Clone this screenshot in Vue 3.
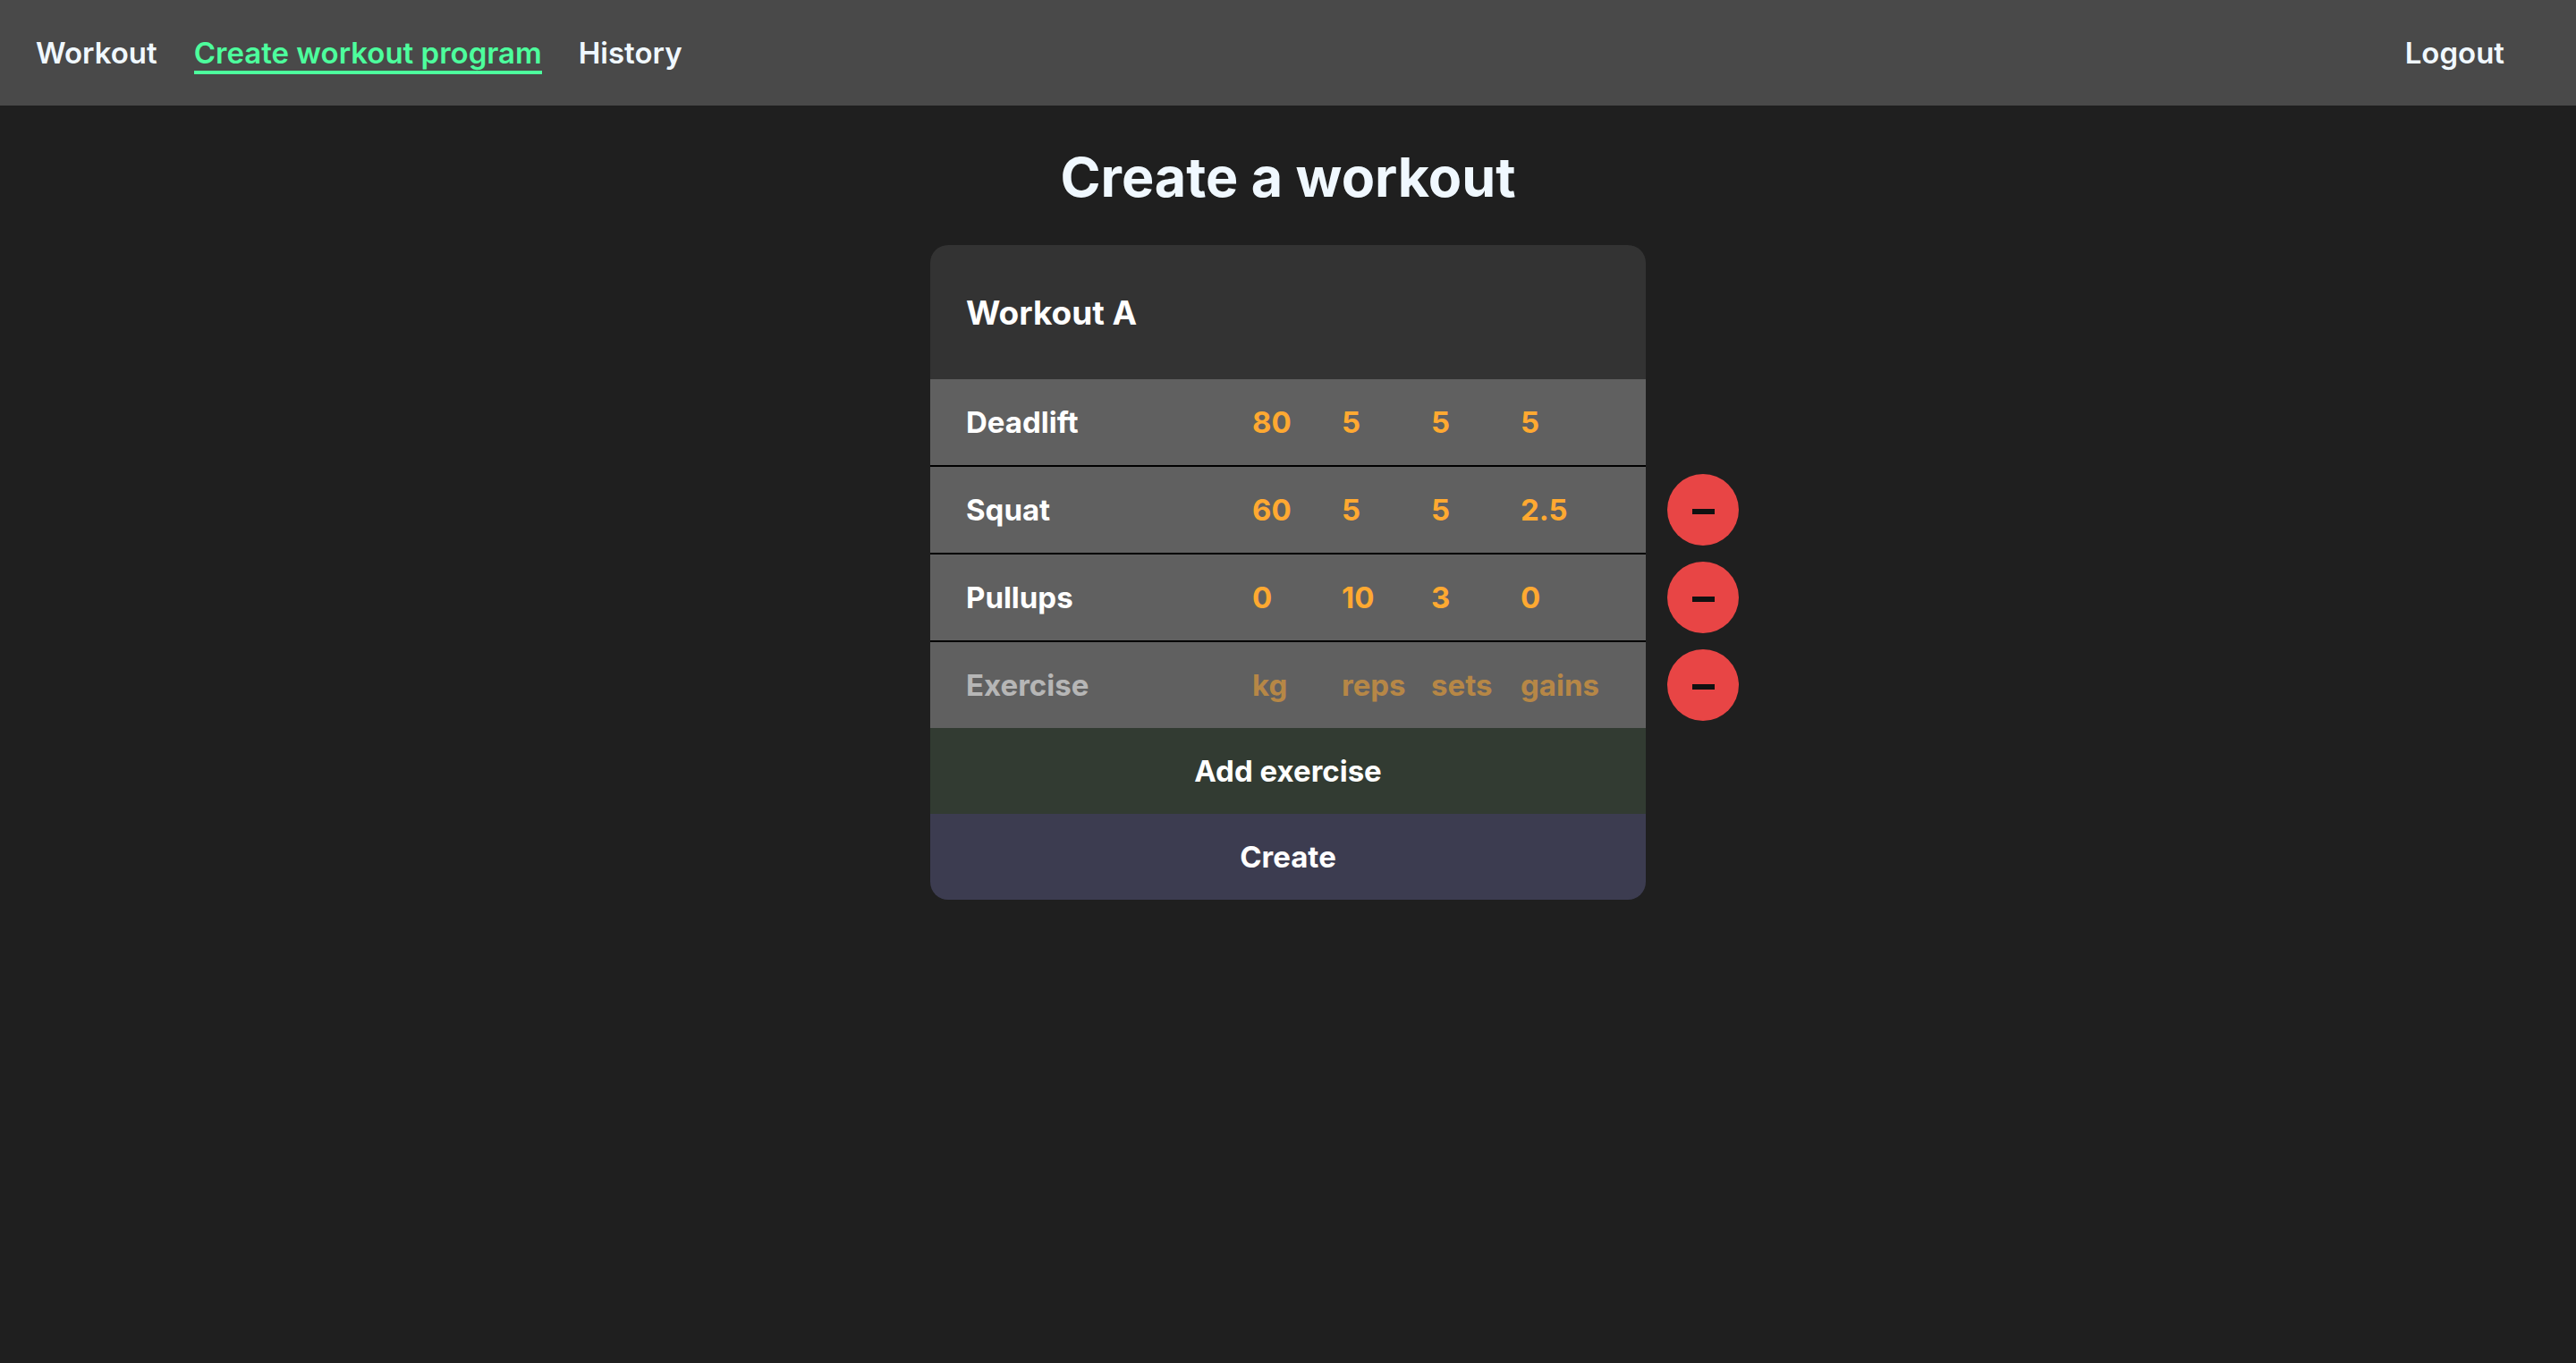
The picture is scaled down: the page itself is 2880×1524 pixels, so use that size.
<script setup>
import { ref } from 'vue'

const links = [
  { label: 'Workout', href: '#workout', active: false },
  { label: 'Create workout program', href: '#create', active: true },
  { label: 'History', href: '#history', active: false }
]

const fields = [
  { key: 'name', placeholder: 'Exercise' },
  { key: 'kg', placeholder: 'kg' },
  { key: 'reps', placeholder: 'reps' },
  { key: 'sets', placeholder: 'sets' },
  { key: 'gains', placeholder: 'gains' }
]

const title = ref('Workout A')
const exercises = ref([
  { id: 1, name: 'Deadlift', kg: '80', reps: '5', sets: '5', gains: '5' },
  { id: 2, name: 'Squat', kg: '60', reps: '5', sets: '5', gains: '2.5' },
  { id: 3, name: 'Pullups', kg: '0', reps: '10', sets: '3', gains: '0' },
  { id: 4, name: '', kg: '', reps: '', sets: '', gains: '' }
])
let nextId = 5

function addExercise() {
  exercises.value.push({ id: nextId++, name: '', kg: '', reps: '', sets: '', gains: '' })
}

function removeExercise(index) {
  exercises.value.splice(index, 1)
}
</script>

<template>
  <div class="page">
    <header class="topbar">
      <nav>
        <ul class="links">
          <li v-for="link in links" :key="link.label">
            <a :href="link.href" class="link" :class="{ active: link.active }">{{ link.label }}</a>
          </li>
        </ul>
      </nav>
      <button type="button" class="logout">Logout</button>
    </header>

    <main class="content">
      <h1 class="heading">Create a workout</h1>
      <form class="card" @submit.prevent>
        <input v-model="title" class="title" type="text" aria-label="Workout name" placeholder="Workout name" />
        <div v-for="(exercise, index) in exercises" :key="exercise.id" class="row">
          <input
            v-for="field in fields"
            :key="field.key"
            v-model="exercise[field.key]"
            class="field"
            :class="{ name: field.key === 'name' }"
            type="text"
            :aria-label="field.placeholder"
            :placeholder="field.placeholder"
          />
          <button
            v-if="index > 0"
            type="button"
            class="remove"
            aria-label="Remove exercise"
            @click="removeExercise(index)"
          >
            <svg class="minus" viewBox="0 0 80 80" aria-hidden="true">
              <rect x="28" y="39" width="25" height="6" fill="#111" />
            </svg>
          </button>
        </div>
        <button type="button" class="action add" @click="addExercise">Add exercise</button>
        <button type="submit" class="action create">Create</button>
      </form>
    </main>
  </div>
</template>

<style>
body {
  background: #1f1f1f;
}
</style>

<style scoped>
.page {
  min-height: 100vh;
  background: #1f1f1f;
  color: aliceblue;
  font-family: Inter, "Liberation Sans", sans-serif;
  font-size: 33px;
}

.page *,
.page {
  box-sizing: border-box;
}

input,
button {
  margin: 0;
  border: 0;
  border-radius: 0;
  background: transparent;
  color: inherit;
  font: inherit;
  outline: none;
}

button {
  cursor: pointer;
}

.topbar {
  display: flex;
  align-items: center;
  justify-content: space-between;
  height: 118px;
  padding: 0 80px 0 40px;
  background: #494949;
  font-weight: 600;
}

.links {
  display: flex;
  gap: 41px;
  margin: 0;
  padding: 0;
  list-style: none;
}

.link {
  color: inherit;
  text-decoration: none;
}

.link.active {
  border-bottom: 4px solid #4dff9d;
  color: #4dff9d;
}

.logout {
  padding: 0;
}

.content {
  display: flex;
  flex-direction: column;
  align-items: center;
}

.heading {
  margin: 40px 0 36px;
  font-size: 61px;
  font-weight: 700;
  line-height: 80px;
}

.card {
  display: flex;
  flex-direction: column;
  width: 800px;
  max-width: 100%;
  border-radius: 20px;
  color: #fff;
  font-weight: 700;
}

.title {
  width: 100%;
  height: 150px;
  padding: 0 40px;
  border-radius: 20px 20px 0 0;
  background: #333;
  font-size: 37px;
}

.row {
  position: relative;
  display: grid;
  grid-template-columns: 320px repeat(4, 1fr);
  height: 96px;
  padding: 0 40px;
  background: #606060;
}

.row + .row {
  height: 98px;
  border-top: 2px solid #000;
}

.field {
  width: 100%;
  min-width: 0;
  padding: 0;
  color: #ffa931;
}

.field.name {
  color: #fff;
}

.field::placeholder {
  color: inherit;
  opacity: 0.54;
}

.remove {
  position: absolute;
  top: 8px;
  left: calc(100% + 24px);
  width: 80px;
  height: 80px;
  padding: 0;
  border-radius: 50%;
  background: #e84545;
}

.minus {
  display: block;
  width: 80px;
  height: 80px;
}

.action {
  height: 96px;
}

.add {
  background: #323b32;
}

.create {
  border-radius: 0 0 20px 20px;
  background: #3c3c50;
}
</style>
